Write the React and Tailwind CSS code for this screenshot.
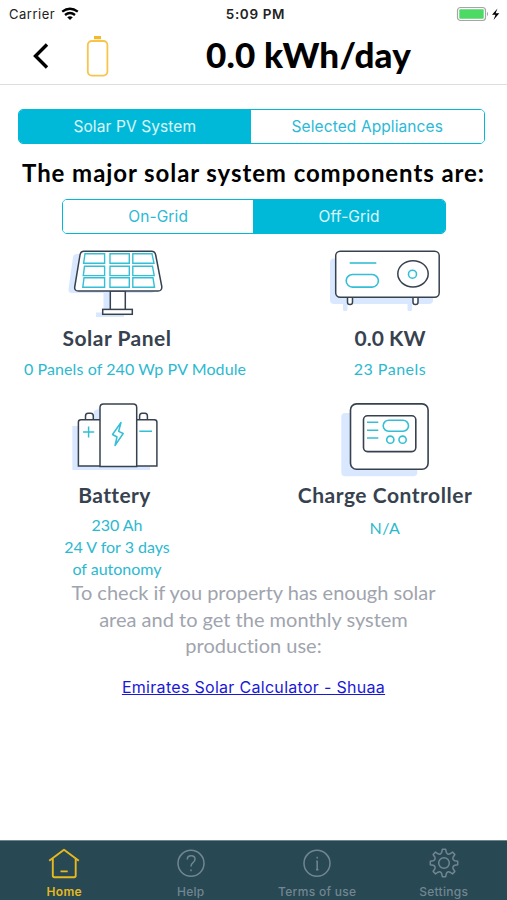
import React from 'react';
import clsx from 'clsx';

const StatusBar = () => (
  <div className="grid h-7 grid-cols-3 items-center pl-[9px] pr-[5px] font-['Inter'] text-[13px] text-[#222]">
    <div className="flex items-center gap-[6px]">
      <span className="pt-px tracking-[0.5px]">Carrier</span>
      <svg width="18" height="14" viewBox="0 0 18 14" fill="none" stroke="#000" strokeWidth="2.3">
        <path d="M1.2 4.7 Q9 -1.3 16.8 4.7" />
        <path d="M4 8 Q9 4 14 8" />
        <path d="M9 13 L6.2 10.2 Q9 8.2 11.8 10.2 Z" fill="#000" stroke="none" />
      </svg>
    </div>
    <span className="text-center text-[13.5px] font-semibold tracking-[0.65px]">5:09 PM</span>
    <div className="flex items-center justify-end">
      <svg width="46" height="16" viewBox="0 0 46 16">
        <rect x="1.5" y="1.5" width="28" height="13" rx="3" fill="#fff" stroke="#a5a5a5" strokeWidth="1.2" />
        <rect x="3.3" y="3.3" width="24.4" height="9.4" rx="1" fill="#4cd964" />
        <path d="M31 5.8 Q33.3 8 31 10.2 Z" fill="#a5a5a5" />
        <path d="M41.5 2.5 L36 8.8 H39.5 L37.5 14 L43.3 7.3 H39.6 Z" fill="#000" />
      </svg>
    </div>
  </div>
);

const Header = () => (
  <header className="flex h-[57px] items-center border-b border-[#dedede]">
    <svg className="ml-8" width="18" height="28" viewBox="0 0 18 28" fill="none" stroke="#000" strokeWidth="3.4">
      <path d="M15 2.5 L3.5 14 L15 25.5" />
    </svg>
    <svg className="ml-9" width="24" height="44" viewBox="0 0 24 44" fill="none">
      <rect x="8" y="2" width="7" height="3.2" fill="#f5b924" />
      <rect x="1.8" y="7" width="19.6" height="34.6" rx="4" stroke="#f7c54d" strokeWidth="1.8" />
    </svg>
    <h1 className="ml-24 pb-1 font-['Lato'] text-[35px] font-black leading-none tracking-[0.2px] text-black">0.0 kWh/day</h1>
  </header>
);

const Segmented = ({ items, active, className }) => (
  <div className={clsx("flex h-[35px] overflow-hidden rounded-[5px] border border-[#00b9d8] font-['Inter'] text-[15.5px] tracking-[0.1px]", className)}>
    {items.map((item, i) => (
      <button
        key={item}
        className={clsx(
          i === 0 ? 'w-[49.8%]' : 'flex-1',
          i === active ? 'bg-[#00b9d8] text-white/85' : 'bg-white text-[#2cb9d6]'
        )}
      >
        {item}
      </button>
    ))}
  </div>
);

const DARK = '#37424f';
const CYAN = '#35bfd6';
const SHADE = '#d9e8ff';

const SolarIcon = () => (
  <svg width="100" height="70" viewBox="0 0 100 70" fill="#fff" stroke={DARK} strokeWidth="1.5">
    <g fill={SHADE} stroke="none">
      <path d="M11 6 H82 L89 40 Q89 45 85 45 H6 Q2 45 2.5 41 L7 9 Q7.500 6 11 6Z" />
      <path d="M37.500 45 H52 V69 H37.500Z M30 64.600 H58 V69 H30Z" />
    </g>
    <path d="M44.300 43 H59.300 V62 H44.300Z" />
    <rect x="36.700" y="61.400" width="29.600" height="4.900" />
    <path d="M18 3.300 H85.500 Q89 3.300 89.700 7 L95.800 38.500 Q96 43 92 43 H12.500 Q8 43 8.800 38.500 L14 7 Q14.600 3.300 18 3.300Z" />
    <g stroke={CYAN} strokeWidth="1.4">
      <path d="M19 5.800 H38.600 V15.300 H17.600Z M44 5.800 H63.300 V15.300 H44Z M66.800 5.800 H86 L88 15.300 H66.800Z" />
      <path d="M18.500 18.300 H38.600 V27.600 H17.300Z M44 18.300 H63.300 V27.600 H44Z M66.800 18.300 H86.500 L88.200 27.600 H66.800Z" />
      <path d="M18 29.800 H38.600 V39.300 H16.800Z M44 29.800 H63.300 V39.300 H44Z M66.800 29.800 H87 L88.500 39.300 H66.800Z" />
    </g>
  </svg>
);

const InverterIcon = () => (
  <svg width="114" height="66" viewBox="0 0 114 66" fill="#fff" stroke={DARK} strokeWidth="1.5">
    <g fill={SHADE} stroke="none">
      <rect x="2" y="10.500" width="103" height="45.500" rx="4" />
      <rect x="15" y="54" width="4.500" height="9" rx="1.500" />
      <rect x="79.500" y="54" width="4.500" height="9" rx="1.500" />
    </g>
    <rect x="19.500" y="47" width="5" height="9.500" rx="2.300" />
    <rect x="85" y="47" width="5" height="9.500" rx="2.300" />
    <rect x="7.700" y="3.200" width="103.500" height="46" rx="4.500" />
    <ellipse cx="85" cy="25.800" rx="15.200" ry="13.100" />
    <g stroke={CYAN} strokeWidth="1.600">
      <path d="M21.700 15 H48.300" />
      <rect x="18.200" y="26.500" width="32.200" height="12.600" rx="6.300" />
      <circle cx="84.500" cy="26.200" r="4" />
    </g>
  </svg>
);

const BatteryIcon = () => (
  <svg width="90" height="72" viewBox="0 0 90 72" fill="#fff" stroke={DARK} strokeWidth="1.5">
    <path d="M2.300 26 H8 V20 H24 V11 L30 8 V40 H80 V70 H2.300Z" fill={SHADE} stroke="none" />
    <path d="M15.500 19.700 V16 Q15.500 13.200 18 13.200 H20.800 Q23.300 13.200 23.300 16 V19.700" />
    <path d="M69.600 19.700 V16 Q69.600 13.200 72.100 13.200 H74.900 Q77.400 13.200 77.400 16 V19.700" />
    <path d="M30 66 H8.400 V22 Q8.400 19.700 11 19.700 H30" />
    <path d="M66.700 66 H86.900 V22 Q86.900 19.700 84.300 19.700 H66.700" />
    <path d="M30 66.500 V7.500 Q30 4 33.500 4 H63.200 Q66.700 4 66.700 7.500 V66.500Z" />
    <g stroke={CYAN} strokeWidth="1.500">
      <path d="M13 32 H24.200 M18.600 26.500 V37.500 M69.300 31.300 H82" />
      <path d="M51 22.500 L42.500 34.500 L47 37 L45 45.500 L53.200 33.500 L48.700 31.300Z" strokeLinejoin="round" />
    </g>
  </svg>
);

const ControllerIcon = () => (
  <svg width="94" height="80" viewBox="0 0 94 80" fill="#fff" stroke={DARK} strokeWidth="1.600">
    <rect x="3.300" y="13" width="76" height="63.300" rx="4" fill={SHADE} stroke="none" />
    <rect x="12.500" y="3.900" width="77.600" height="65.400" rx="6" />
    <rect x="25.500" y="15.800" width="52.300" height="35.800" rx="4" />
    <g stroke={CYAN} strokeWidth="1.600">
      <path d="M29 22.300 H40.300 M29 30.300 H40.300 M29 38 H40.300" />
      <rect x="45.200" y="20.300" width="25.300" height="10.900" rx="5.400" />
      <circle cx="52.300" cy="39.700" r="3.600" />
      <circle cx="64.600" cy="39.700" r="3.600" />
    </g>
  </svg>
);

const Component = ({ icon, title, lines, className, titleClass, linesClass }) => (
  <div className={clsx("flex shrink-0 flex-col items-center whitespace-nowrap font-['Lato']", className)}>
    {icon}
    <h3 className={clsx('text-[21px] font-bold leading-6 text-[#37424f]', titleClass)}>{title}</h3>
    <div className={clsx('text-center text-[16px] leading-[22px] text-[#2cb9d0]', linesClass)}>
      {lines.map((line) => (
        <p key={line}>{line}</p>
      ))}
    </div>
  </div>
);

// eight rounded teeth around the centre of a 32px box
const gearPath = () => {
  const pt = (deg, r) => {
    const a = (deg * Math.PI) / 180;
    return `${(16 + r * Math.sin(a)).toFixed(2)} ${(16 - r * Math.cos(a)).toFixed(2)}`;
  };
  let d = `M${pt(-7, 13.8)}`;
  for (let i = 0; i < 8; i += 1) {
    const a = i * 45;
    d += ` L${pt(a + 7, 13.8)} L${pt(a + 12, 11)} Q${pt(a + 22.5, 8.7)} ${pt(a + 33, 11)} L${pt(a + 38, 13.8)}`;
  }
  return `${d}Z`;
};

const tabs = [
  {
    label: 'Home',
    icon: (
      <>
        <path d="M1.200 13.700 L16 2.700 L30.800 13.700" />
        <path d="M4.800 11.500 V28.500 Q4.800 30.200 6.500 30.200 H26 Q27.700 30.200 27.700 28.500 V11.500 M12.500 24.400 H19.700" />
      </>
    ),
  },
  {
    label: 'Help',
    icon: (
      <>
        <circle cx="16" cy="16.300" r="13" />
        <path d="M12.300 12.500 Q12.300 8.800 16.200 8.800 Q20 8.800 20 12.200 Q20 14.200 18 15.600 Q16 17 16 19.500 M16 22.500 V24.200" />
      </>
    ),
  },
  {
    label: 'Terms of use',
    icon: (
      <>
        <circle cx="16" cy="16.300" r="13" />
        <path d="M16.200 9.700 V11.500 M15.200 14.300 H16.200 V22.800 M15 22.800 H17.500" />
      </>
    ),
  },
  {
    label: 'Settings',
    icon: (
      <>
        <path d={gearPath()} />
        <circle cx="16" cy="16" r="5.300" />
      </>
    ),
  },
];

const TabBar = () => (
  <nav className="grid h-[60px] grid-cols-4 border-t border-[#6f858e] bg-[#284854] pl-px">
    {tabs.map((tab, i) => (
      <a
        key={tab.label}
        href="#"
        className={clsx("flex flex-col items-center pt-[6px] font-['Inter'] text-[12px] font-medium leading-4 tracking-[0.3px]", i === 0 ? 'text-[#e5b91f]' : 'text-[#718690]')}
      >
        <svg width="32" height="32" viewBox="0 0 32 32" fill="none" stroke="currentColor" strokeWidth={i === 0 ? 1.9 : 1.5} strokeLinejoin="round">
          {tab.icon}
        </svg>
        <span className={clsx('mt-[5px]', i === 0 && 'font-semibold')}>{tab.label}</span>
      </a>
    ))}
  </nav>
);

const App = () => (
  <div className="flex h-[900px] w-[507px] flex-col overflow-hidden bg-white [font-variant-ligatures:none]">
    <StatusBar />
    <Header />
    <main className="flex-1">
      <Segmented className="ml-[18px] mt-6 w-[467px]" items={['Solar PV System', 'Selected Appliances']} active={0} />
      <h2 className="mt-[14px] whitespace-nowrap text-center font-['Lato'] text-[24px] font-bold leading-[30px] tracking-[0.92px] text-black">
        The major solar system components are:
      </h2>
      <Segmented className="ml-[62px] mt-[11px] w-[384px]" items={['On-Grid', 'Off-Grid']} active={1} />

      <div className="flex pt-[14px]">
        <Component className="ml-[-10px] w-[254px]" icon={<div className="pr-[2px]"><SolarIcon /></div>} title="Solar Panel" lines={['0 Panels of 240 Wp PV Module']} titleClass="mt-[8px] tracking-[0.5px]" linesClass="mt-[8px] pl-[36px] tracking-[0.1px]" />
        <Component className="ml-[19px] w-[254px]" icon={<div className="h-[70px] pr-[10px]"><InverterIcon /></div>} title="0.0 KW" lines={['23 Panels']} titleClass="mt-[8px]" linesClass="mt-[8px] tracking-[0.5px]" />
      </div>

      <div className="mt-[20px] flex h-[180px]">
        <Component className="ml-[-10px] w-[254px]" icon={<div className="h-20 pr-[4px]"><BatteryIcon /></div>} title="Battery" lines={['230 Ah', '24 V for 3 days', 'of autonomy']} titleClass="mt-[3px] pr-[5px] tracking-[0.4px]" linesClass="mt-[7px]" />
        <Component className="ml-[14px] w-[254px]" icon={<ControllerIcon />} title="Charge Controller" lines={['N/A']} titleClass="mt-[3px] tracking-[0.52px]" linesClass="mt-[10px] tracking-[0.5px]" />
      </div>

      <p className="-mt-px whitespace-nowrap text-center font-['Lato'] text-[20px] leading-[26.700px] text-[#a0a4ae]">
        To check if you property has enough solar
        <br />
        area and to get the monthly system
        <br />
        production use:
      </p>
      <p className="mt-4 text-center font-['Inter'] text-[16px] leading-6 tracking-[0.3px]">
        <a href="#" className="text-[#1a18d8] underline">Emirates Solar Calculator - Shuaa</a>
      </p>
    </main>
    <TabBar />
  </div>
);

export default App;
